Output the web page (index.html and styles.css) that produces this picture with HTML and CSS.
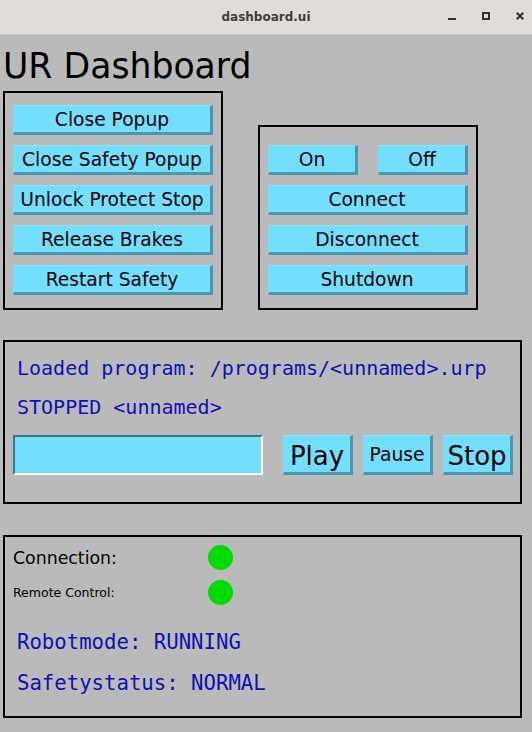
FILE: index.html
```html
<!DOCTYPE html>
<html>
<head>
<meta charset="utf-8">
<title>dashboard.ui</title>
<link rel="stylesheet" href="styles.css">
</head>
<body>
<div class="titlebar">
  <div class="tb-spacer"></div>
  <div class="tb-title">dashboard.ui</div>
  <div class="tb-controls">
    <svg class="tb-icon" width="8" height="8" viewBox="0 0 8 8"><rect x="0" y="6" width="8" height="2" fill="#2e3436"/></svg>
    <svg class="tb-icon" width="8" height="8" viewBox="0 0 8 8"><rect x="1" y="1" width="6" height="6" fill="none" stroke="#2e3436" stroke-width="2"/></svg>
    <svg class="tb-icon" width="8" height="8" viewBox="0 0 8 8"><path d="M0.7 0.7 L7.3 7.3 M7.3 0.7 L0.7 7.3" stroke="#2e3436" stroke-width="2" fill="none"/></svg>
  </div>
</div>
<div class="app">
  <h1 class="heading">UR Dashboard</h1>
  <div class="top-row">
    <div class="frame frame-left">
      <button class="btn btn-wide">Close Popup</button>
      <button class="btn btn-wide">Close Safety Popup</button>
      <button class="btn btn-wide">Unlock Protect Stop</button>
      <button class="btn btn-wide">Release Brakes</button>
      <button class="btn btn-wide">Restart Safety</button>
    </div>
    <div class="frame frame-right">
      <div class="pair">
        <button class="btn btn-half">On</button>
        <button class="btn btn-half">Off</button>
      </div>
      <button class="btn btn-wide">Connect</button>
      <button class="btn btn-wide">Disconnect</button>
      <button class="btn btn-wide">Shutdown</button>
    </div>
  </div>
  <div class="frame frame-program">
    <div class="mono line-loaded">Loaded program: /programs/&lt;unnamed&gt;.urp</div>
    <div class="mono line-state">STOPPED &lt;unnamed&gt;</div>
    <div class="prog-row">
      <div class="entry"></div>
      <button class="btn btn-prog btn-big">Play</button>
      <button class="btn btn-prog">Pause</button>
      <button class="btn btn-prog btn-big">Stop</button>
    </div>
  </div>
  <div class="frame frame-status">
    <div class="leds">
      <div class="led-label led-label-big">Connection:</div>
      <div class="led"></div>
      <div class="led-label led-label-small">Remote Control:</div>
      <div class="led"></div>
    </div>
    <div class="mono mono-big line-mode">Robotmode: RUNNING</div>
    <div class="mono mono-big line-safety">Safetystatus: NORMAL</div>
  </div>
</div>
</body>
</html>
```
FILE: styles.css
```css
* { box-sizing: border-box; }
html, body { margin: 0; padding: 0; }
body {
  width: 532px;
  height: 732px;
  overflow: hidden;
  background: #bababa;
  font-family: "DejaVu Sans", sans-serif;
  color: #000;
}
.titlebar {
  height: 35px;
  background: #e0ddd9;
  border-bottom: 1px solid #cdc7c2;
  display: grid;
  grid-template-columns: 1fr auto 1fr;
  align-items: center;
}
.tb-title {
  font-family: "DejaVu Sans", sans-serif;
  font-weight: bold;
  font-size: 12px;
  color: #3d3f40;
}
.tb-controls {
  justify-self: end;
  align-self: start;
  display: flex;
  gap: 26px;
  margin-top: 12px;
  margin-right: 8px;
}
.tb-icon { display: block; }
.app { padding-left: 3px; }
.heading {
  margin: 11px 0 0 0;
  font-weight: normal;
  font-size: 34.67px;
  line-height: 40px;
  height: 40px;
}
.top-row {
  display: flex;
  align-items: flex-end;
  gap: 35px;
  margin-top: 5px;
}
.frame {
  border: 2px solid #000;
  display: flex;
  flex-direction: column;
}
.frame-left {
  width: 220px;
  height: 219px;
  padding: 12px 8px 13px 8px;
  gap: 10px;
}
.frame-right {
  width: 220px;
  height: 185px;
  padding: 18px 8px 13px 8px;
  gap: 10px;
}
.pair {
  display: flex;
  gap: 20px;
}
.btn {
  font-family: "DejaVu Sans", sans-serif;
  font-size: 18.67px;
  color: #000;
  background: #72dfff;
  border-style: solid;
  border-width: 1px 3px 3px 1px;
  border-color: #86e6ff #4b97ae #4b97ae #72dfff;
  padding: 2px 0 0 0;
  margin: 0;
  height: 30px;
  line-height: 1;
  display: flex;
  align-items: center;
  justify-content: center;
  white-space: nowrap;
}
.btn-wide { width: 200px; }
.btn-half { width: 90px; }
.frame-program {
  width: 519px;
  height: 164px;
  margin-top: 30px;
  padding: 14px 7px 0 8px;
}
.mono {
  font-family: "DejaVu Sans Mono", monospace;
  font-size: 20px;
  line-height: 24px;
  height: 24px;
  color: #1010b4;
  padding-left: 4px;
  white-space: pre;
}
.mono-big { font-size: 20.67px; }
.line-state { margin-top: 15px; }
.prog-row {
  display: flex;
  margin-top: 16px;
  height: 40px;
}
.entry {
  width: 250px;
  height: 40px;
  background: #72dfff;
  border-style: solid;
  border-width: 2px;
  border-color: #3d7485 #ffffff #ffffff #3d7485;
  margin-right: 20px;
}
.btn-prog {
  width: 70px;
  height: 40px;
  margin-right: 10px;
  padding-top: 3px;
}
.btn-prog:last-child { margin-right: 0; }
.btn-big { font-size: 26px; }
.frame-status {
  width: 519px;
  height: 183px;
  margin-top: 31px;
  padding: 8px 8px 0 8px;
}
.leds {
  display: grid;
  grid-template-columns: 195px 25px;
  grid-auto-rows: 25px;
  row-gap: 10px;
  align-items: center;
}
.led-label-big { font-size: 17.33px; }
.led-label-small { font-size: 12.5px; }
.led {
  width: 25px;
  height: 25px;
  border-radius: 50%;
  background: #00dc00;
}
.line-mode { margin-top: 25px; }
.line-safety { margin-top: 17px; }
```
